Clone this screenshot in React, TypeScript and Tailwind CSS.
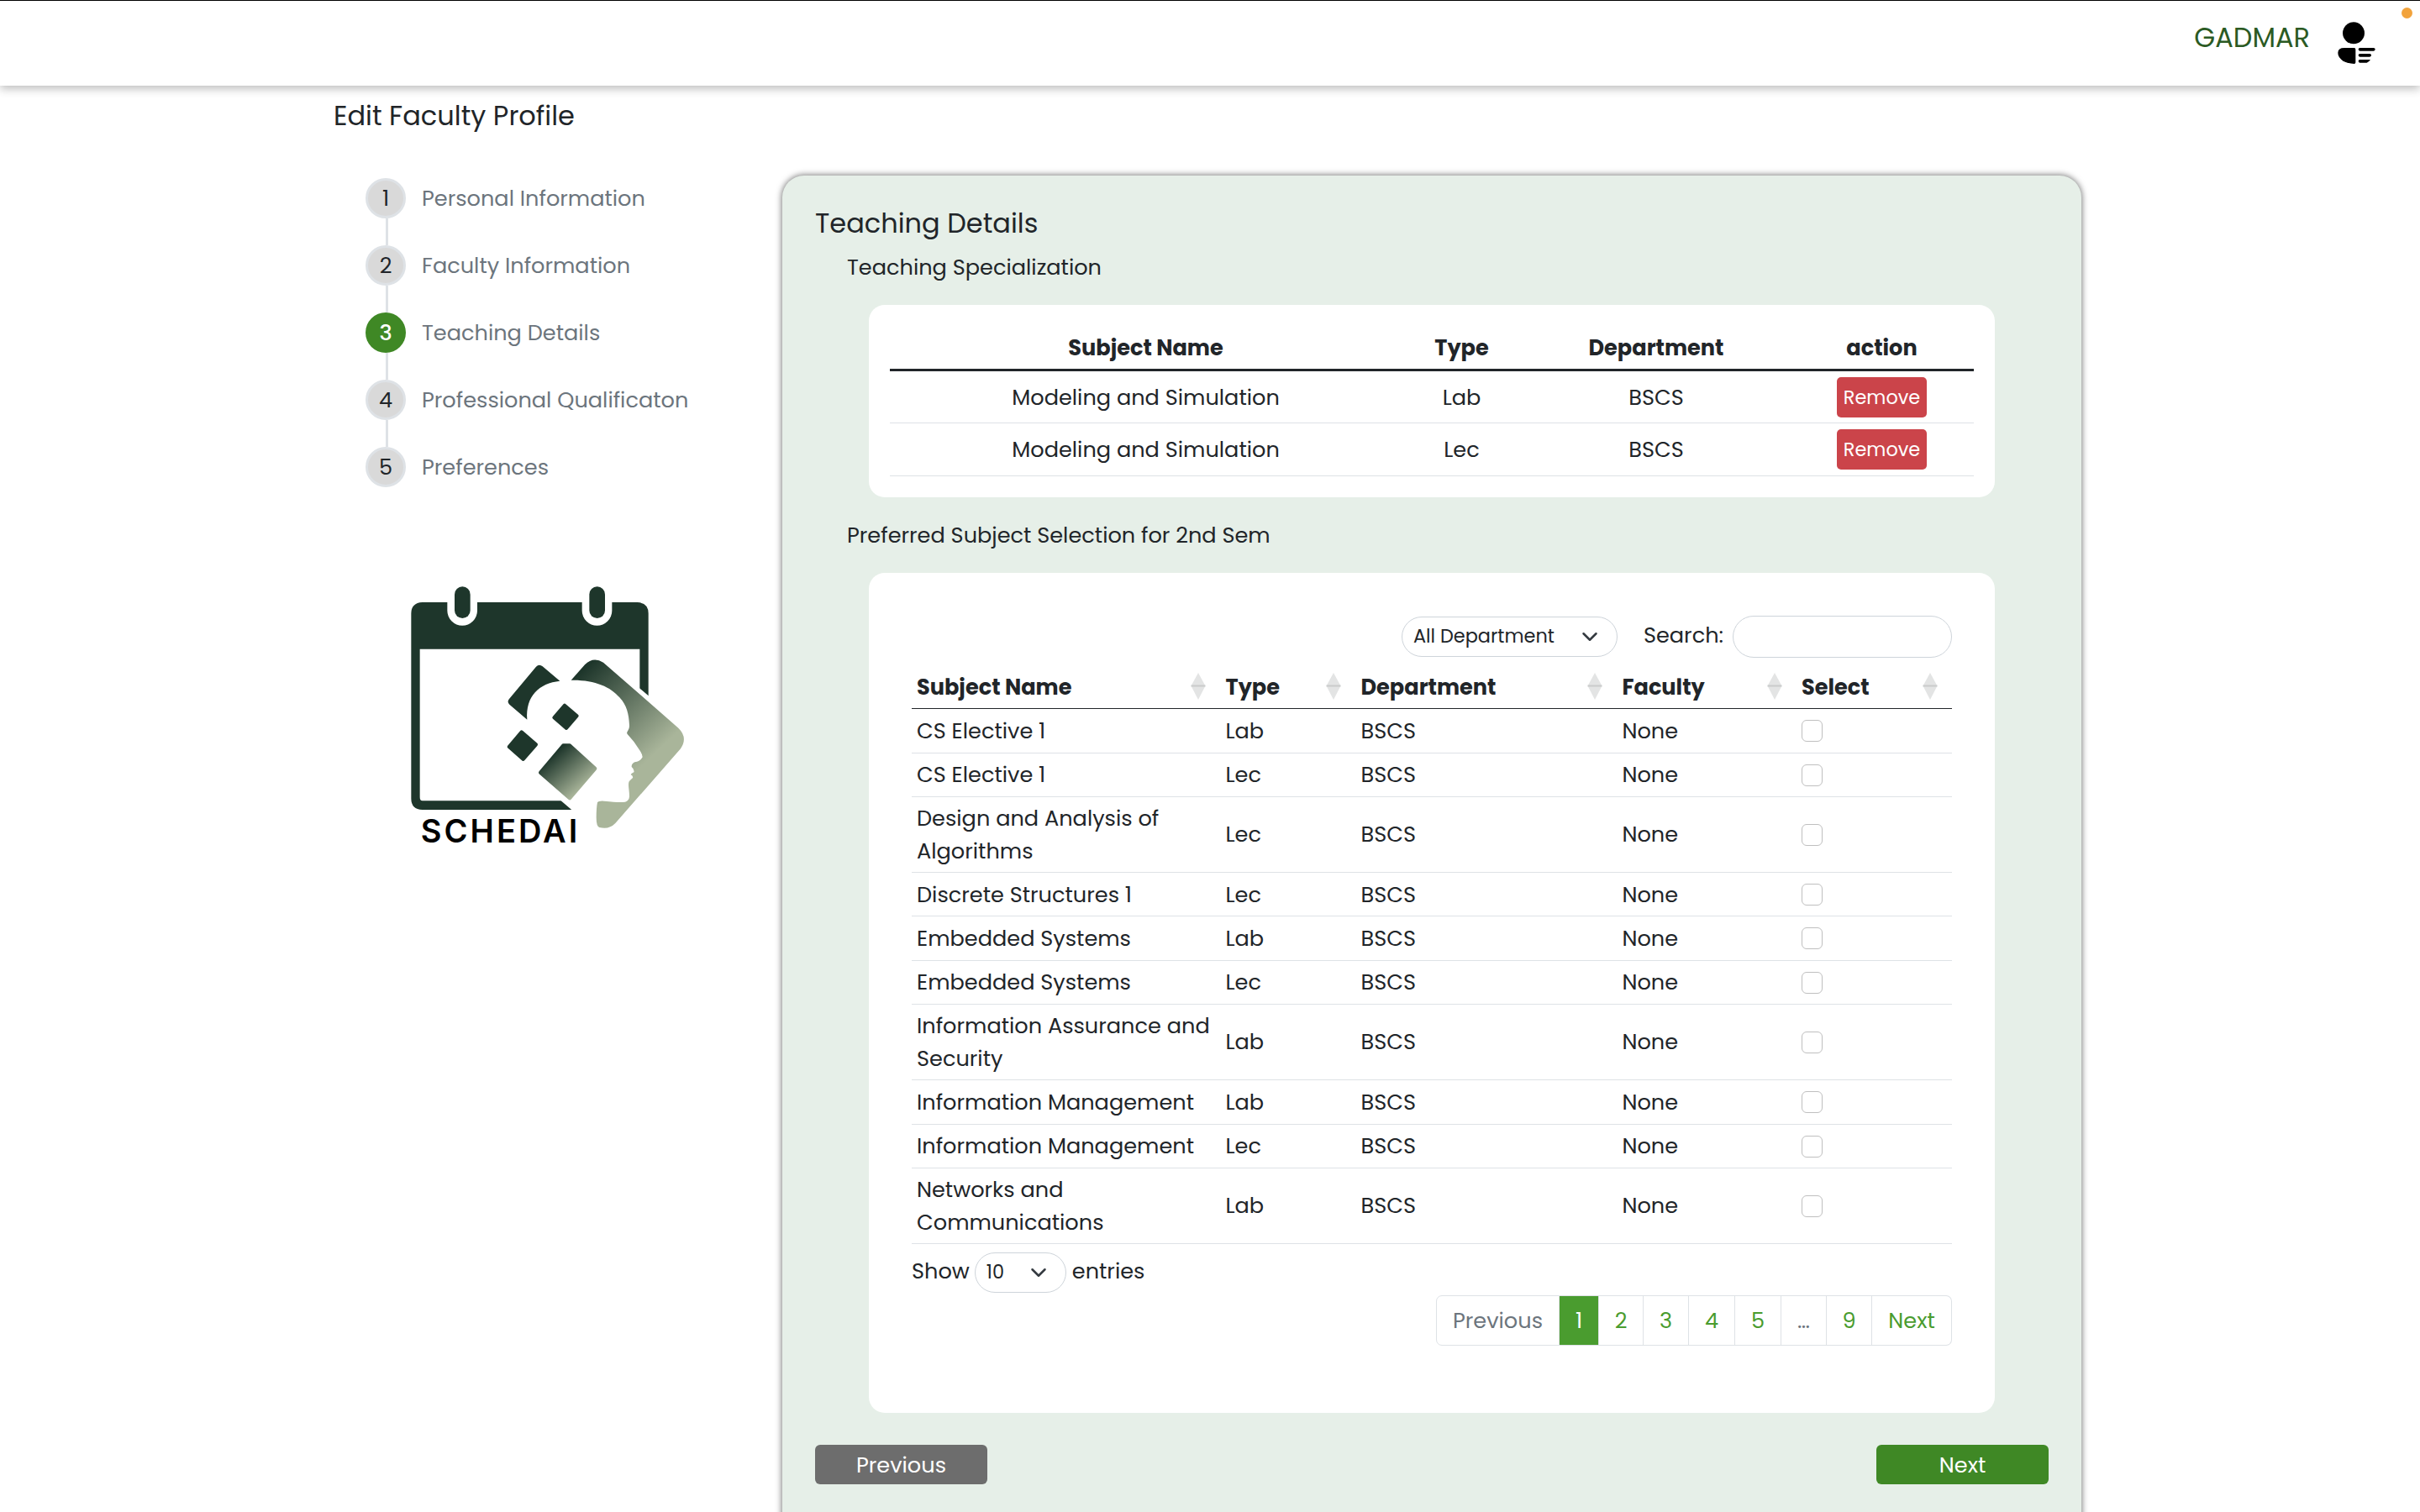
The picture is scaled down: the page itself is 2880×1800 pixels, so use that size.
import type { ReactNode } from "react";

const steps = [
  "Personal Information",
  "Faculty Information",
  "Teaching Details",
  "Professional Qualificaton",
  "Preferences",
];
const activeStep = 2;

const specializations = [
  { name: "Modeling and Simulation", type: "Lab", department: "BSCS", height: "h-[62px] pt-px" },
  { name: "Modeling and Simulation", type: "Lec", department: "BSCS", height: "h-[63px]" },
];

type Subject = { name: ReactNode; type: "Lab" | "Lec"; height: string };

const subjects: Subject[] = [
  { name: "CS Elective 1", type: "Lab", height: "h-[53px]" },
  { name: "CS Elective 1", type: "Lec", height: "h-[52px]" },
  { name: <>Design and Analysis of<br />Algorithms</>, type: "Lec", height: "h-[90px]" },
  { name: "Discrete Structures 1", type: "Lec", height: "h-[52px] pt-px" },
  { name: "Embedded Systems", type: "Lab", height: "h-[53px]" },
  { name: "Embedded Systems", type: "Lec", height: "h-[52px]" },
  { name: <>Information Assurance and<br />Security</>, type: "Lab", height: "h-[90px]" },
  { name: "Information Management", type: "Lab", height: "h-[53px]" },
  { name: "Information Management", type: "Lec", height: "h-[52px]" },
  { name: <>Networks and<br />Communications</>, type: "Lab", height: "h-[90px]" },
];

const subjectColumns = ["Subject Name", "Type", "Department", "Faculty", "Select"];

const pages = [
  { label: "Previous", style: "w-[147px] rounded-l-[7px] border-l text-[#6c757d]" },
  { label: "1", style: "w-[47px] border-[#4a9c2f] bg-[#4a9c2f] text-white" },
  { label: "2", style: "w-[53px] text-[#4a9c2f]" },
  { label: "3", style: "w-[54px] text-[#4a9c2f]" },
  { label: "4", style: "w-[55px] text-[#4a9c2f]" },
  { label: "5", style: "w-[55px] text-[#4a9c2f]" },
  { label: "…", style: "w-[54px] text-[#6c757d]" },
  { label: "9", style: "w-[54px] text-[#4a9c2f]" },
  { label: "Next", style: "w-[95px] rounded-r-[7px] text-[#4a9c2f]" },
];

function UserIcon() {
  return (
    <svg className="mt-[25px] h-[50px] w-[45px]" viewBox="666 77 135 150" fill="#000">
      <circle cx="723" cy="117" r="39" />
      <path d="M690 170H725Q730 170 730 175V222Q730 227 725 227C690 226 667 208 667 187Q667 170 690 170Z" />
      <rect x="740" y="170" width="60" height="11" rx="5.5" />
      <rect x="740" y="191" width="46" height="11" rx="5.5" />
      <path d="M745 212H783Q778 220 770 223H745Q740 222 740 217.500T745 212Z" />
    </svg>
  );
}

function Chevron() {
  return (
    <svg className="h-5 w-5" viewBox="0 0 16 16" fill="none" stroke="#343a40" strokeWidth="2" strokeLinecap="round" strokeLinejoin="round">
      <path d="m2 5 6 6 6-6" />
    </svg>
  );
}

function SortIcon() {
  return (
    <svg className="h-8 w-[18px]" viewBox="0 0 18 32" fill="#212529" fillOpacity="0.125">
      <path d="M9 0L18 16.500H0Z" />
      <path d="M0 14.500H18L9 32Z" />
    </svg>
  );
}

function Logo() {
  return (
    <svg className="mt-[100px] ml-[60px] h-[340px] w-[380px]" viewBox="0 0 1140 1020">
      <defs>
        <linearGradient id="face" gradientUnits="userSpaceOnUse" x1="712" y1="345" x2="980" y2="630">
          <stop offset="0" stopColor="#1e362b" />
          <stop offset="1" stopColor="#a9b59a" />
        </linearGradient>
        <linearGradient id="tile" gradientUnits="userSpaceOnUse" x1="595" y1="655" x2="700" y2="775">
          <stop offset="0" stopColor="#1e362b" />
          <stop offset="1" stopColor="#a9b59a" />
        </linearGradient>
      </defs>
      <g fill="#1e362b">
        <path
          fillRule="evenodd"
          d="M128 111H895Q935 113 935 151V852H128Q88 850 88 812V151Q88 113 128 111ZM119 278V807Q119 820 128 820H904V278Z"
        />
        <path fill="#fff" d="M880 398L960 466V900H717L600 800L760 640Z" />
        <path fill="#fff" d="M217 100H324V141A53.500 53.500 0 0 1 217 141ZM698 100H805V141A53.500 53.500 0 0 1 698 141Z" />
        <rect x="243" y="55" width="56" height="113" rx="28" />
        <rect x="724" y="55" width="56" height="113" rx="28" />
        <path d="M619 392L557 340Q545 330 534 341L438 456Q429 467 439 476L502 530C496 445 545 400 619 392Z" />
      </g>
      <g fill="#1e362b" stroke="#1e362b" strokeWidth="12" strokeLinejoin="round">
        <path d="M636 479L680 516.500L642 561L598 523Z" />
        <path d="M482 574L534 619L488 672L437 627Z" />
      </g>
      <path
        fill="url(#tile)"
        stroke="url(#tile)"
        strokeWidth="14"
        strokeLinejoin="round"
        d="M631 623H654L744 705L654 810L550 719Z"
      />
      <path
        fill="url(#face)"
        d="M659 389L708 334Q738 304 774 326L1042 560Q1077 594 1050 634L817 900Q794 924 760 915Q749 912 749 880Q749 845 753 826Q758 819 778 821C815 825 835 826 852 824Q866 820 867 805C867 780 861 762 866 751Q872 744 879 738Q881 731 872 727Q873 722 883 718Q886 708 875 699Q874 688 886 682Q906 679 914 664Q914 655 905 641Q885 608 860 582Q856 577 862 569Q868 560 867 550C865 510 858 479 832 451C800 412 740 387 659 389Z"
      />
      <text
        x="122"
        y="969"
        fontSize="114"
        fontWeight="600"
        textLength="560"
        lengthAdjust="spacing"
        fill="#000"
        fontFamily="Inter, sans-serif"
      >
        SCHEDAI
      </text>
    </svg>
  );
}

export default function App() {
  return (
    <div className="relative flex h-[1800px] flex-col overflow-hidden bg-white text-[25.6px] leading-[38.4px] text-[#212529] [font-family:Poppins,Inter,sans-serif]">
      <header className="flex h-[102px] shrink-0 items-start justify-end gap-[33px] border-t border-black bg-white pr-[53px] shadow-[0_4px_10px_rgba(0,0,0,0.25)]">
        <span className="mt-5 text-[32px] leading-[48px] text-[#2b5a23]">GADMAR</span>
        <UserIcon />
      </header>
      <span className="absolute top-[9px] right-[9px] h-[13px] w-[13px] rounded-full bg-[#f2a33c]" />

      <h1 className="ml-[397px] h-[71px] shrink-0 text-[32px] leading-[72px]">Edit Faculty Profile</h1>

      <main className="flex min-h-0 flex-1">
        <aside className="w-[931px] shrink-0">
          <div className="pl-[400px]">
            <ol className="mt-[39px] ml-[35px] flex flex-col">
              {steps.map((step, i) => (
                <li key={step}>
                  {i > 0 && <div className="ml-6 h-8 w-[3px] bg-[#dee2e6]" />}
                  <div className="flex items-center gap-[19px]">
                    <span
                      className={
                        i === activeStep
                          ? "flex h-12 w-12 items-center justify-center rounded-full bg-[#3f8825] font-medium text-white"
                          : "flex h-12 w-12 items-center justify-center rounded-full border-[3px] border-[#dee2e6] bg-[#d9d9d9]"
                      }
                    >
                      {i + 1}
                    </span>
                    <span className="text-[#6c757d]">{step}</span>
                  </div>
                </li>
              ))}
            </ol>
            <Logo />
          </div>
        </aside>

        <section className="mt-9 h-[1700px] w-[1546px] shrink-0 rounded-[26px] bg-[#e6efe8] px-[39px] pt-[33px] shadow-[0_0_7px_1px_rgba(0,0,0,0.5)]">
          <h2 className="text-[32px] leading-[48px]">Teaching Details</h2>
          <h3 className="mt-[9px] ml-[38px] leading-[38px]">Teaching Specialization</h3>

          <div className="mx-16 mt-[26px] h-[229px] rounded-[19px] bg-white px-[25px]">
            <div className="grid h-[79px] grid-cols-[609px_143px_320px_217px] border-b-[3px] border-[#212529] pt-8 text-center leading-[38px] font-bold">
              <span>Subject Name</span>
              <span>Type</span>
              <span>Department</span>
              <span>action</span>
            </div>
            {specializations.map((row) => (
              <div
                key={row.type}
                className={`${row.height} grid grid-cols-[609px_143px_320px_217px] items-center border-b border-[#dee2e6] text-center`}
              >
                <span>{row.name}</span>
                <span>{row.type}</span>
                <span>{row.department}</span>
                <button className="mx-auto h-12 w-[107px] rounded-[5px] bg-[#cb444a] pb-px text-[22.4px] leading-[46px] text-white">
                  Remove
                </button>
              </div>
            ))}
          </div>

          <h3 className="mt-[26px] ml-[38px] leading-[38px]">Preferred Subject Selection for 2nd Sem</h3>

          <div className="mx-16 mt-[26px] flex h-[1000px] flex-col rounded-[19px] bg-white px-[51px] pt-[51px]">
            <div className="flex h-[50px] shrink-0 justify-end">
              <div className="mt-px mr-[31px] flex h-12 w-[257px] items-center justify-between rounded-full border border-[#ced4da] pr-[22px] pl-[13px]">
                <span className="pb-px text-[22.4px]">All Department</span>
                <Chevron />
              </div>
              <label className="flex">
                <span className="mr-[11px] leading-[46px]">Search:</span>
                <input className="h-[50px] w-[261px] rounded-full border border-[#ced4da] bg-white" />
              </label>
            </div>

            <div className="grid h-[61px] shrink-0 grid-cols-[367.5px_161px_311px_213.5px_1fr] border-b border-[#212529] leading-[38px] font-bold">
              {subjectColumns.map((column) => (
                <div key={column} className="flex items-start justify-between pt-4 pr-[17.5px] pl-[6px]">
                  <span>{column}</span>
                  <span className="mt-[2px]">
                    <SortIcon />
                  </span>
                </div>
              ))}
            </div>
            {subjects.map((subject, i) => (
              <div
                key={i}
                className={`${subject.height} grid shrink-0 grid-cols-[367.5px_161px_311px_213.5px_1fr] items-center border-b border-[#dee2e6]`}
              >
                <span className="pl-[6px] whitespace-nowrap">{subject.name}</span>
                <span className="pl-[6px]">{subject.type}</span>
                <span className="pl-[6px]">BSCS</span>
                <span className="pl-[6px]">None</span>
                <span className="ml-[6px] h-[26px] w-[25px] rounded-[6px] border border-[#bfbfbf] bg-white" />
              </div>
            ))}

            <div className="mt-[10px] flex h-12 items-center">
              <span className="pb-1">Show</span>
              <div className="ml-[6px] flex h-12 w-[109px] items-center justify-between rounded-full border border-[#ced4da] pr-[22px] pl-[13px]">
                <span className="pb-px text-[22.4px]">10</span>
                <Chevron />
              </div>
              <span className="ml-[7px] pb-1">entries</span>
            </div>

            <nav className="mt-[3px] flex h-[60px] justify-end text-center">
              {pages.map((page) => (
                <span key={page.label} className={`${page.style} border-y border-r border-[#dee2e6] leading-[58px]`}>
                  {page.label}
                </span>
              ))}
            </nav>
          </div>

          <div className="mt-[38px] flex justify-between text-white">
            <button className="h-[47px] w-[205px] rounded-[6px] bg-[#6d6d6d] leading-[48px]">Previous</button>
            <button className="h-[47px] w-[205px] rounded-[6px] bg-[#3f8825] leading-[48px]">Next</button>
          </div>
        </section>
      </main>
    </div>
  );
}
